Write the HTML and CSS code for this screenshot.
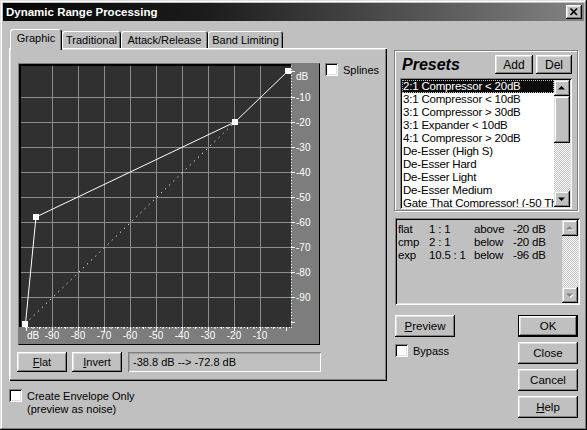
FILE: index.html
```html
<!DOCTYPE html>
<html>
<head>
<meta charset="utf-8">
<link rel="stylesheet" href="styles.css">
</head>
<body>
<div class="window">
  <div class="titlebar">
    <span class="title">Dynamic Range Processing</span>
    <span class="xbtn"><svg width="16" height="14" viewBox="0 0 16 14"><path d="M4.5 3.5 L11 10 M11 3.5 L4.5 10" stroke="#000" stroke-width="1.7" fill="none"/></svg></span>
  </div>
  <div class="body">
    <div class="leftcol">
      <div class="tabs">
        <div class="tab sel w1">Graphic</div>
        <div class="tab w2">Traditional</div>
        <div class="tab w3">Attack/Release</div>
        <div class="tab w4">Band Limiting</div>
      </div>
      <div class="tabpanel">
        <div class="graphrow">
          <div class="graphframe">
            <svg class="plot" width="300" height="280" viewBox="19 64 300 280">
              <rect x="19" y="64" width="300" height="280" fill="#7d7d7d"/>
              <rect x="21" y="66" width="270" height="261" fill="#303030"/>
              <rect x="19" y="64" width="272" height="2" fill="#000"/>
              <rect x="19" y="64" width="2" height="263" fill="#000"/>
              <g stroke="#8c8c8c" stroke-width="1">
                <path d="M52.5 66V327M78.5 66V327M104.5 66V327M130.5 66V327M156.5 66V327M182.5 66V327M208.5 66V327M234.5 66V327M260.5 66V327"/>
                <path d="M21 97.5H291M21 122.5H291M21 147.5H291M21 172.5H291M21 197.5H291M21 222.5H291M21 247.5H291M21 272.5H291M21 297.5H291"/>
              </g>
              <path d="M25.5 323.5 L235 122" stroke="#fff" stroke-width="1" stroke-dasharray="1.2 4.5" fill="none"/>
              <polyline points="25.5,323.5 36,217 235,122 288,71" stroke="#fff" stroke-width="1" fill="none"/>
              <g fill="#fff">
                <rect x="22" y="321" width="6" height="6"/>
                <rect x="33" y="214" width="6" height="6"/>
                <rect x="232" y="119" width="6" height="6"/>
                <rect x="285" y="68" width="6" height="6"/>
              </g>
              <g stroke="#fff" stroke-width="1" fill="none">
                <path d="M291.5 66V328" stroke-dasharray="1 2"/>
                <path d="M288 71.5H295M291 97.5H295M291 122.5H295M291 147.5H295M291 172.5H295M291 197.5H295M291 222.5H295M291 247.5H295M291 272.5H295M291 297.5H295M291 322.5H295"/>
                <path d="M25 327.5H292" stroke-dasharray="1 2"/>
                <path d="M26.5 327V331M33 327V329M39.5 327V329M46 327V329M52.5 327V331M59 327V329M65.5 327V329M72 327V329M78.5 327V331M85 327V329M91.5 327V329M98 327V329M104.5 327V331M111 327V329M117.5 327V329M124 327V329M130.5 327V331M137 327V329M143.5 327V329M150 327V329M156.5 327V331M163 327V329M169.5 327V329M176 327V329M182.5 327V331M189 327V329M195.5 327V329M202 327V329M208.5 327V331M215 327V329M221.5 327V329M228 327V329M234.5 327V331M241 327V329M247.5 327V329M254 327V329M260.5 327V331M267 327V329M273.5 327V329M280 327V329M286.5 327V331"/>
              </g>
              <g class="axl" fill="#fff">
                <text x="296" y="80">dB</text>
                <text x="296" y="101">-10</text>
                <text x="296" y="126">-20</text>
                <text x="296" y="151">-30</text>
                <text x="296" y="176">-40</text>
                <text x="296" y="201">-50</text>
                <text x="296" y="226">-60</text>
                <text x="296" y="251">-70</text>
                <text x="296" y="276">-80</text>
                <text x="296" y="301">-90</text>
              </g>
              <g class="axl" fill="#fff" text-anchor="middle">
                <text x="33" y="339">dB</text>
                <text x="52" y="339">-90</text>
                <text x="78" y="339">-80</text>
                <text x="104" y="339">-70</text>
                <text x="130" y="339">-60</text>
                <text x="156" y="339">-50</text>
                <text x="182" y="339">-40</text>
                <text x="208" y="339">-30</text>
                <text x="234" y="339">-20</text>
                <text x="260" y="339">-10</text>
              </g>
            </svg>
          </div>
          <div class="check-row">
            <span class="cbox"></span><span>Splines</span>
          </div>
        </div>
        <div class="btnrow">
          <div class="btn b-small"><span><u>F</u>lat</span></div>
          <div class="btn b-small"><span><u>I</u>nvert</span></div>
          <div class="readout">-38.8 dB --&gt; -72.8 dB</div>
        </div>
      </div>
      <div class="envelope">
        <span class="cbox"></span>
        <div class="envtext">Create Envelope Only<br>(preview as noise)</div>
      </div>
    </div>
    <div class="rightcol">
      <div class="presets">
        <div class="phead">
          <span class="ptitle">Presets</span>
          <div class="btn b-add">Add</div>
          <div class="btn b-del">Del</div>
        </div>
        <div class="listbox">
          <div class="items">
            <div class="item selected"><span>2:1 Compressor &lt; 20dB</span></div>
            <div class="item">3:1 Compressor &lt; 10dB</div>
            <div class="item">3:1 Compressor &gt; 30dB</div>
            <div class="item">3:1 Expander &lt; 10dB</div>
            <div class="item">4:1 Compressor &gt; 20dB</div>
            <div class="item">De-Esser (High S)</div>
            <div class="item">De-Esser Hard</div>
            <div class="item">De-Esser Light</div>
            <div class="item">De-Esser Medium</div>
            <div class="item">Gate That Compressor! (-50 Threshold)</div>
          </div>
          <div class="sb">
            <div class="sbbtn"><svg width="16" height="16" viewBox="0 0 16 16"><path d="M4 9.5h7L7.5 6z" fill="#000"/></svg></div>
            <div class="thumb"></div>
            <div class="track"></div>
            <div class="sbbtn"><svg width="16" height="16" viewBox="0 0 16 16"><path d="M4 6.5h7L7.5 10z" fill="#000"/></svg></div>
          </div>
        </div>
      </div>
      <div class="infobox">
        <div class="infotext">
          <span>flat</span><span>1 : 1</span><span>above</span><span>-20 dB</span>
          <span>cmp</span><span>2 : 1</span><span>below</span><span>-20 dB</span>
          <span>exp</span><span>10.5 : 1</span><span>below</span><span>-96 dB</span>
        </div>
        <div class="sb">
          <div class="sbbtn"><svg width="16" height="16" viewBox="0 0 16 16"><path d="M5 10.5h7L8.5 7z" fill="#fff"/><path d="M4 9.5h7L7.5 6z" fill="#808080"/></svg></div>
          <div class="track"></div>
          <div class="sbbtn"><svg width="16" height="16" viewBox="0 0 16 16"><path d="M5 7.5h7L8.5 11z" fill="#fff"/><path d="M4 6.5h7L7.5 10z" fill="#808080"/></svg></div>
        </div>
      </div>
      <div class="lower">
        <div class="lowleft">
          <div class="btn b-main"><span><u>P</u>review</span></div>
          <div class="check-row bypass">
            <span class="cbox"></span><span>Bypass</span>
          </div>
        </div>
        <div class="lowright">
          <div class="btn b-main default">OK</div>
          <div class="btn b-main">Close</div>
          <div class="btn b-main">Cancel</div>
          <div class="btn b-main"><span><u>H</u>elp</span></div>
        </div>
      </div>
    </div>
  </div>
</div>
</body>
</html>
```
FILE: styles.css
```css
* { box-sizing: border-box; }
html, body { margin: 0; padding: 0; }
body {
  width: 587px;
  height: 430px;
  overflow: hidden;
  background: #c0c0c0;
  font-family: "Liberation Sans", Arial, sans-serif;
  font-size: 11px;
  color: #000;
}
.window {
  width: 587px;
  height: 430px;
  padding: 3px;
  background: #c0c0c0;
  box-shadow: inset -1px -1px #000, inset 1px 1px #dfdfdf, inset -2px -2px #808080, inset 2px 2px #fff;
}
.titlebar {
  height: 18px;
  display: flex;
  align-items: center;
  justify-content: space-between;
  padding: 0 2px 0 3px;
  background: linear-gradient(to right, #060606 0%, #1c1c1c 35%, #5a5a5a 75%, #848484 100%);
}
.title {
  color: #fff;
  font-weight: bold;
  font-size: 11.5px;
}
.xbtn {
  width: 16px;
  height: 14px;
  display: block;
  background: #c0c0c0;
  box-shadow: inset -1px -1px #000, inset 1px 1px #fff, inset -2px -2px #808080, inset 2px 2px #dfdfdf;
}
.xbtn svg { display: block; }
.body {
  display: flex;
  padding: 8px 0 0 6px;
}
.leftcol { width: 378px; }
.tabs {
  display: flex;
  align-items: flex-end;
  height: 19px;
  position: relative;
  z-index: 1;
}
.tab {
  height: 17px;
  line-height: 16px;
  padding-top: 1px;
  text-align: center;
  background: #c0c0c0;
  border-radius: 3px 3px 0 0;
  box-shadow: inset 1px 1px #fff, inset -1px 0 #000, inset -2px 0 #808080;
}
.tab.sel {
  height: 21px;
  margin-bottom: -2px;
  margin-left: 1px;
  line-height: 16px;
  padding-top: 1px;
  box-shadow: inset 1px 1px #fff, inset -1px 0 #000, inset -2px 0 #808080;
}
.w1 { width: 52px; }
.w2 { width: 59px; }
.w3 { width: 87px; }
.w4 { width: 75px; }
.tabpanel {
  height: 333px;
  padding: 15px 6px 0 9px;
  background: #c0c0c0;
  box-shadow: inset 1px 1px #fff, inset -1px -1px #000, inset -2px -2px #808080, inset 2px 2px #dfdfdf;
}
.graphrow {
  display: flex;
  align-items: flex-start;
  gap: 5px;
}
.graphframe {
  width: 302px;
  height: 282px;
  border: 1px solid;
  border-color: #808080 #000 #000 #808080;
}
.plot { display: block; }
.axl text {
  font-family: "Liberation Sans", Arial, sans-serif;
  font-size: 10px;
}
.check-row {
  display: flex;
  align-items: center;
  gap: 5px;
}
.cbox {
  width: 13px;
  height: 13px;
  flex: none;
  background: #fff;
  box-shadow: inset 1px 1px #808080, inset -1px -1px #fff, inset 2px 2px #000, inset -2px -2px #dfdfdf;
}
.btn {
  display: flex;
  align-items: center;
  justify-content: center;
  background: #c0c0c0;
  box-shadow: inset -1px -1px #000, inset 1px 1px #fff, inset -2px -2px #808080, inset 2px 2px #dfdfdf;
  flex: none;
}
.btn.default {
  box-shadow: inset 0 0 0 1px #000, inset -2px -2px #000, inset 2px 2px #fff, inset -3px -3px #808080, inset 3px 3px #dfdfdf;
}
.btnrow {
  display: flex;
  margin-top: 7px;
  margin-left: -1px;
}
.b-small { width: 50px; height: 20px; margin-right: 5px; }
.b-small + .b-small { margin-right: 6px; }
.readout {
  width: 193px;
  height: 20px;
  padding: 0 5px;
  display: flex;
  align-items: center;
  box-shadow: inset 1px 1px #808080, inset -1px -1px #fff, inset 2px 2px #a0a0a0;
}
.envelope {
  display: flex;
  align-items: flex-start;
  gap: 5px;
  margin-top: 8px;
}
.envtext { line-height: 13px; padding-top: 1px; }
.rightcol {
  width: 186px;
  margin-left: 7px;
  margin-top: 21px;
}
.presets {
  width: 184px;
  height: 161px;
  padding: 4px 5px 0 5px;
  border: 1px solid #808080;
  box-shadow: inset 1px 1px #fff, 1px 1px #fff;
}
.phead {
  display: flex;
  align-items: center;
  height: 19px;
}
.ptitle {
  margin-left: 2px;
  margin-right: auto;
  font-weight: bold;
  font-style: italic;
  font-size: 16px;
}
.b-add { width: 38px; height: 19px; margin-right: 3px; font-size: 12px; }
.b-del { width: 36px; height: 19px; font-size: 12px; }
.listbox {
  margin-top: 4px;
  width: 172px;
  height: 131px;
  padding: 2px;
  display: flex;
  box-shadow: inset 1px 1px #808080, inset -1px -1px #fff, inset 2px 2px #000, inset -2px -2px #dfdfdf;
}
.items {
  flex: 1;
  background: #fff;
  overflow: hidden;
  font-size: 11.5px;
  letter-spacing: -0.2px;
}
.item {
  height: 13px;
  line-height: 13px;
  padding-left: 1px;
  white-space: nowrap;
}
.item.selected {
  background: #0c0c0c;
  color: #fff;
  outline: 1px dotted #c0c0c0;
  outline-offset: -1px;
}
.sb {
  width: 16px;
  flex: none;
  display: flex;
  flex-direction: column;
}
.sbbtn {
  width: 16px;
  height: 16px;
  flex: none;
  background: #c0c0c0;
  box-shadow: inset -1px -1px #000, inset 1px 1px #dfdfdf, inset -2px -2px #808080, inset 2px 2px #fff;
}
.sbbtn svg { display: block; }
.thumb {
  height: 47px;
  flex: none;
  background: #c0c0c0;
  box-shadow: inset -1px -1px #000, inset 1px 1px #dfdfdf, inset -2px -2px #808080, inset 2px 2px #fff;
}
.track {
  flex: 1;
  background-image: conic-gradient(#fff 25%, #c0c0c0 0 50%, #fff 0 75%, #c0c0c0 0);
  background-size: 2px 2px;
}
.infobox {
  margin-top: 7px;
  margin-left: 1px;
  width: 185px;
  height: 87px;
  padding: 2px;
  display: flex;
  box-shadow: inset 1px 1px #808080, inset -1px -1px #fff, inset 2px 2px #000, inset -2px -2px #dfdfdf;
}
.infotext {
  flex: 1;
  display: grid;
  grid-template-columns: 31px 45px 39px auto;
  grid-auto-rows: 13px;
  align-content: start;
  padding: 3px 0 0 1px;
  line-height: 13px;
  font-size: 11.5px;
  letter-spacing: -0.2px;
}
.lower {
  display: flex;
  margin-top: 10px;
}
.lowleft {
  margin-left: 1px;
}
.b-main { width: 60px; height: 22px; font-size: 11.5px; }
.bypass { margin-top: 7px; }
.lowright {
  margin-left: auto;
  margin-right: 2px;
  display: flex;
  flex-direction: column;
  gap: 5px;
}
```
